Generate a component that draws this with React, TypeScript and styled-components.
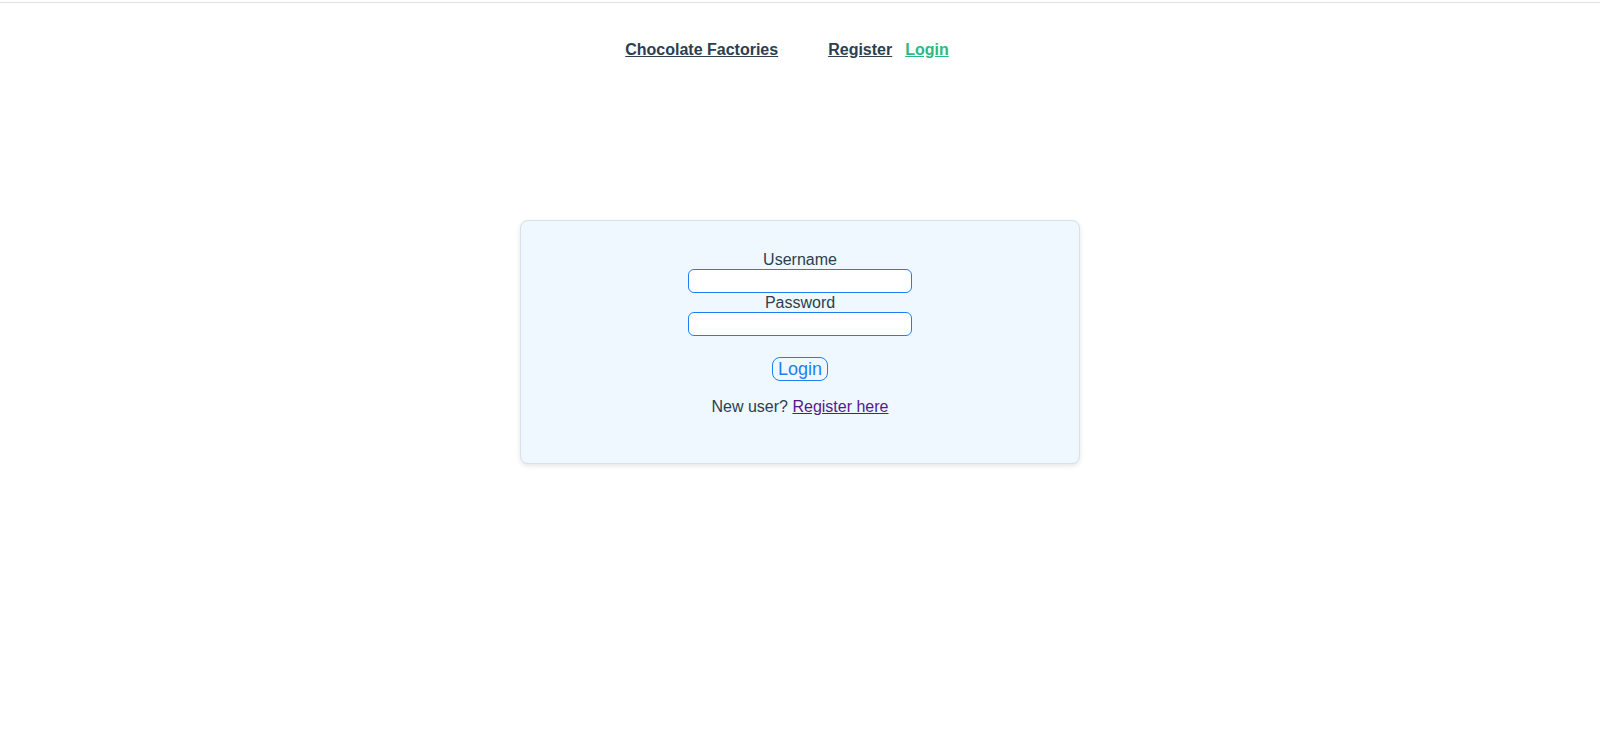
import React from "react";
import styled, { createGlobalStyle } from "styled-components";

const GlobalStyle = createGlobalStyle`
  html, body {
    margin: 0;
    padding: 0;
    background: #ffffff;
  }
  body {
    font-family: "Liberation Sans", Arial, sans-serif;
    color: #2c3e50;
  }
`;

const Page = styled.div`
  margin-top: 2px;
  border-top: 1px solid #e2e2e2;
  min-height: 738px;
  font-family: "Liberation Sans", Arial, sans-serif;
  color: #2c3e50;
`;

const Nav = styled.nav`
  display: flex;
  justify-content: center;
  align-items: center;
  padding: 38px 26px 0 0;
  line-height: 18px;
`;

const NavLink = styled.a<{ $active?: boolean; $gapAfter?: number }>`
  font-size: 16px;
  font-weight: bold;
  color: ${(p) => (p.$active ? "#2bb982" : "#2c3e50")};
  text-decoration: underline;
  margin-right: ${(p) => p.$gapAfter ?? 0}px;
  cursor: pointer;
`;

const Main = styled.main`
  display: flex;
  justify-content: center;
  padding-top: 161px;
`;

const Card = styled.form`
  box-sizing: border-box;
  width: 560px;
  padding: 29px 0 47px;
  display: flex;
  flex-direction: column;
  align-items: center;
  background: #eef8fe;
  border: 1px solid #d9e1e7;
  border-radius: 8px;
  box-shadow: 0 2px 5px rgba(0, 0, 0, 0.1);
`;

const Label = styled.label`
  font-size: 16px;
  line-height: 19px;
  color: #2c3e50;
`;

const Input = styled.input`
  box-sizing: border-box;
  width: 224px;
  height: 24px;
  margin: 0;
  padding: 0 8px;
  border: 1px solid #1e7ff5;
  border-radius: 6px;
  background: #ffffff;
  font-family: "Liberation Sans", Arial, sans-serif;
  font-size: 14px;
  outline: none;
`;

const Button = styled.button`
  box-sizing: border-box;
  margin-top: 21px;
  height: 24px;
  padding: 0 5px;
  border: 1px solid #1e7ff5;
  border-radius: 8px;
  background: transparent;
  color: #1e7ff5;
  font-family: "Liberation Sans", Arial, sans-serif;
  font-size: 18px;
  line-height: 22px;
  cursor: pointer;
`;

const Footer = styled.p`
  margin: 17px 0 0;
  font-size: 16px;
  line-height: 18px;
  color: #2c3e50;
`;

const RegisterLink = styled.a`
  color: #551a8b;
  text-decoration: underline;
  cursor: pointer;
`;

export default function App() {
  return (
    <>
      <GlobalStyle />
      <Page>
        <Nav>
          <NavLink $gapAfter={50}>Chocolate Factories</NavLink>
          <NavLink $gapAfter={13}>Register</NavLink>
          <NavLink $active>Login</NavLink>
        </Nav>
        <Main>
          <Card onSubmit={(e) => e.preventDefault()}>
            <Label htmlFor="username">Username</Label>
            <Input id="username" type="text" />
            <Label htmlFor="password">Password</Label>
            <Input id="password" type="password" />
            <Button type="submit">Login</Button>
            <Footer>
              New user? <RegisterLink>Register here</RegisterLink>
            </Footer>
          </Card>
        </Main>
      </Page>
    </>
  );
}
